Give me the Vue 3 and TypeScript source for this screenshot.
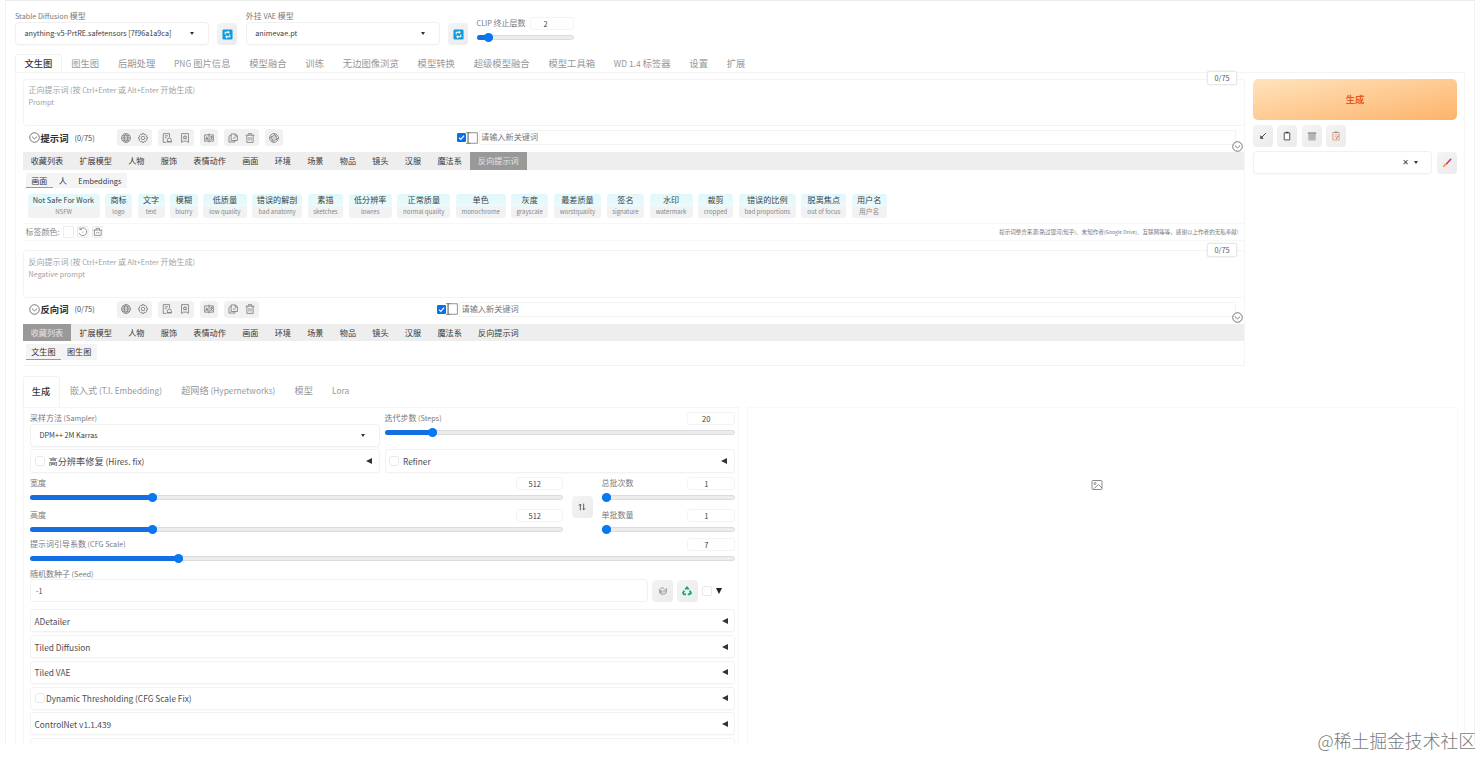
<script setup lang="ts">
import { h, type FunctionalComponent } from 'vue'

interface Tag { zh: string; en: string; w: number }
interface PromptBlock {
  key: string
  title: string
  placeholder: string
  hint: string
  icons: string[][]
  active: string
  subs: string[]
  tags: Tag[]
}

// Sets Latin runs slightly smaller than the Chinese text around them.
const Mix: FunctionalComponent<{ t: string }> = (props) =>
  h('span', { class: 'mix' }, props.t.split(/([\x20-\x7e]+)/).filter(Boolean).map((s) =>
    /^[\x20-\x7e]/.test(s) ? h('span', { class: 'latin' }, s) : s))
Mix.props = ['t']

const icons: Record<string, string> = {
  globe: 'M8 1a7 7 0 1 0 0 14A7 7 0 0 0 8 1ZM1 8h14M2.2 4.5h11.6M2.2 11.5h11.6M8 1c-4 4-4 10 0 14M8 1c4 4 4 10 0 14',
  gear: 'M6.5 1h3l.5 2 1.8-.8 2 2L13 6l2 .5v3l-2 .5.8 1.8-2 2L10 13l-.5 2h-3L6 13l-1.8.8-2-2L3 10l-2-.5v-3L3 6l-.8-1.8 2-2L6 3ZM8 5.3a2.7 2.7 0 1 0 0 5.4 2.7 2.7 0 0 0 0-5.4Z',
  history: 'M7 15H2V1h10v6M4.5 4.5h5M4.5 7.5h3M12 8a3.5 3.5 0 0 0-3.5 3.5V14H15v-2.5A3.5 3.5 0 0 0 12 8M8 14h7.5',
  bookmark: 'M2.5 1h11v14l-3-2h-5l-3 2ZM8 4l1 2 2 .2-1.5 1.4.4 2L8 8.6l-1.9 1 .4-2L5 6.2 7 6Z',
  translate: 'M1 3h14v10H1ZM8 1v14M3 11l1.5-5L6 11M3.5 9.5h2M10 6h4M12 5v2M10.5 11 13.5 6.5M10.5 7.5l3 3.5',
  copy: 'M5 1.5h7l3 3V12H5ZM5 4H3L1.5 6v8.5H11V12M11.5 1.5V5H15M8 8h4',
  trash: 'M1 3.5h14M5.5 3V1h5v2M3 3.5V15h10V3.5M6.3 6.5v5.5M9.7 6.5v5.5',
  swirl: 'M8 1a7 7 0 1 0 0 14A7 7 0 0 0 8 1ZM8 4l3.5 2v4L8 12l-3.5-2V6ZM8 1l4 4.5M15 8l-4 3M8 15l-4-4.5M1 8l4-3M8 7v2',
}

const mainTabs = ['文生图', '图生图', '后期处理', 'PNG 图片信息', '模型融合', '训练', '无边图像浏览', '模型转换', '超级模型融合', '模型工具箱', 'WD 1.4 标签器', '设置', '扩展']
const categories = ['收藏列表', '扩展模型', '人物', '服饰', '表情动作', '画面', '环境', '场景', '物品', '镜头', '汉服', '魔法系', '反向提示词']
const genTabs = ['生成', '嵌入式 (T.I. Embedding)', '超网络 (Hypernetworks)', '模型', 'Lora']

const tags: Tag[] = [
  { zh: 'Not Safe For Work', en: 'NSFW', w: 72 },
  { zh: '商标', en: 'logo', w: 27.5 },
  { zh: '文字', en: 'text', w: 27 },
  { zh: '模糊', en: 'blurry', w: 28 },
  { zh: '低质量', en: 'low quality', w: 43.5 },
  { zh: '错误的解剖', en: 'bad anatomy', w: 50.4 },
  { zh: '素描', en: 'sketches', w: 35.6 },
  { zh: '低分辨率', en: 'lowres', w: 43.3 },
  { zh: '正常质量', en: 'normal quality', w: 53.3 },
  { zh: '单色', en: 'monochrome', w: 50 },
  { zh: '灰度', en: 'grayscale', w: 37.2 },
  { zh: '最差质量', en: 'worstquality', w: 47.8 },
  { zh: '签名', en: 'signature', w: 37.7 },
  { zh: '水印', en: 'watermark', w: 43 },
  { zh: '裁剪', en: 'cropped', w: 35.3 },
  { zh: '错误的比例', en: 'bad proportions', w: 57.5 },
  { zh: '脱离焦点', en: 'out of focus', w: 45 },
  { zh: '用户名', en: '用户名', w: 35 },
]

const prompts: PromptBlock[] = [
  {
    key: 'positive', title: '提示词', placeholder: '正向提示词 (按 Ctrl+Enter 或 Alt+Enter 开始生成)', hint: 'Prompt',
    icons: [['globe', 'gear'], ['history', 'bookmark'], ['translate'], ['copy', 'trash'], ['swirl']],
    active: '反向提示词', subs: ['画面', '人', 'Embeddings'], tags,
  },
  {
    key: 'negative', title: '反向词', placeholder: '反向提示词 (按 Ctrl+Enter 或 Alt+Enter 开始生成)', hint: 'Negative prompt',
    icons: [['globe', 'gear'], ['history', 'bookmark'], ['translate'], ['copy', 'trash']],
    active: '收藏列表', subs: ['文生图', '图生图'], tags: [],
  },
]

const accordions = [
  { name: 'ADetailer', check: false },
  { name: 'Tiled Diffusion', check: false },
  { name: 'Tiled VAE', check: false },
  { name: 'Dynamic Thresholding (CFG Scale Fix)', check: true },
  { name: 'ControlNet v1.1.439', check: false },
]

const fill = (px: number) => ({ width: `${px}px` })
</script>

<template>
  <div class="page">
    <div class="frame">
      <header class="quick">
        <div class="field model">
          <span class="label"><Mix t="Stable Diffusion 模型" /></span>
          <div class="select"><Mix t="anything-v5-PrtRE.safetensors [7f96a1a9ca]" /><i class="caret" /></div>
        </div>
        <button class="btn refresh">
          <svg viewBox="0 0 12 12"><rect x=".5" y=".5" width="11" height="11" rx="1.5" fill="#129bdb" /><path d="M3.5 6V3.5h3.8M6.3 2.2 7.8 3.5 6.3 4.9M8.5 6v2.5H4.7M5.7 7.1 4.2 8.5l1.5 1.4" fill="none" stroke="#fff" stroke-width="1.1" /></svg>
        </button>
        <div class="field model">
          <span class="label"><Mix t="外挂 VAE 模型" /></span>
          <div class="select"><Mix t="animevae.pt" /><i class="caret" /></div>
        </div>
        <button class="btn refresh">
          <svg viewBox="0 0 12 12"><rect x=".5" y=".5" width="11" height="11" rx="1.5" fill="#129bdb" /><path d="M3.5 6V3.5h3.8M6.3 2.2 7.8 3.5 6.3 4.9M8.5 6v2.5H4.7M5.7 7.1 4.2 8.5l1.5 1.4" fill="none" stroke="#fff" stroke-width="1.1" /></svg>
        </button>
        <div class="clip">
          <div class="slider-head"><span class="label"><Mix t="CLIP 终止层数" /></span><span class="num">2</span></div>
          <div class="track"><div class="bar" :style="fill(16)"><b /></div></div>
        </div>
      </header>

      <nav class="tabs main-tabs">
        <span v-for="(t, i) in mainTabs" :key="t" class="tab" :class="{ on: i === 0 }"><Mix :t="t" /></span>
      </nav>

      <main class="body">
        <div class="top">
          <div class="prompts">
            <section v-for="p in prompts" :key="p.key" class="prompt" :class="p.key">
              <div class="textarea">
                <p><Mix :t="p.placeholder" /></p><p><Mix :t="p.hint" /></p>
                <span class="counter">0/75</span>
              </div>
              <div class="head">
                <svg class="chev" viewBox="0 0 12 12"><circle cx="6" cy="6" r="5.2" /><path d="M3.2 5 6 7.6 8.8 5" /></svg>
                <strong>{{ p.title }}</strong><span class="count">(0/75)</span>
                <div class="groups">
                  <div v-for="(g, gi) in p.icons" :key="gi" class="group">
                    <svg v-for="n in g" :key="n" viewBox="0 0 16 16"><path :d="icons[n]" /></svg>
                  </div>
                </div>
                <div class="keyword">
                  <svg class="tick" viewBox="0 0 10 10"><rect width="10" height="10" rx="1.5" fill="#0b6fe6" /><path d="m2.2 5.2 2 2 3.7-4.2" fill="none" stroke="#fff" stroke-width="1.3" /></svg>
                  <svg class="cursor" viewBox="0 0 12 12"><rect x="2" y=".8" width="9.3" height="10.4" /><path d="M0 .6h4.5M2.2.6v10.8M0 11.4h4.5" /></svg>
                  <div class="kinput">请输入新关键词</div>
                </div>
                <svg class="chev fold" viewBox="0 0 12 12"><circle cx="6" cy="6" r="5.2" /><path d="M3.2 5 6 7.6 8.8 5" /></svg>
              </div>
              <div class="cats">
                <span v-for="c in categories" :key="c" :class="{ on: c === p.active }">{{ c }}</span>
              </div>
              <div class="subs">
                <div v-for="(s, i) in p.subs" :key="s" class="sub" :class="{ on: i === 0 }"><Mix :t="s" /></div>
              </div>
              <div v-if="p.tags.length" class="taglist">
                <div v-for="t in p.tags" :key="t.zh" class="tag" :style="fill(t.w)"><div class="zh"><Mix :t="t.zh" /></div><em><Mix :t="t.en" /></em></div>
              </div>
              <div v-if="p.tags.length" class="colors">
                <span class="ctitle">标签颜色:</span><i class="swatch" />
                <svg viewBox="0 0 12 12"><rect x=".5" y=".5" width="11" height="11" rx="1" class="edge" /><path d="M3 3.2a4 4 0 1 1-.7 4M3 1.5v2h2M6 5.5v1.2" /></svg>
                <svg viewBox="0 0 12 12"><rect x=".5" y=".5" width="11" height="11" rx="1" class="edge" /><path d="M1.5 4h9M4.2 4V2.2h3.6V4M2.5 4v5.5h7V4M5 6v1.5M7 6v1.5" /></svg>
                <small><Mix t="提示词整合来源:路过银河(知乎)、未知作者(Google Drive)、互联网等等，感谢以上作者的无私奉献!" /></small>
              </div>
            </section>
          </div>
          <aside class="side">
            <button class="generate">生成</button>
            <div class="tools">
              <button class="btn"><svg viewBox="0 0 12 12"><path d="M9.3 2.7 3.8 8.2" fill="none" stroke="#444" stroke-width="1.2" /><path d="M2.8 5.2v4h4Z" fill="#333" /></svg></button>
              <button class="btn"><svg viewBox="0 0 12 12"><path d="M2.7 2.2h6.6v8.5H2.7Z" fill="#fff" stroke="#555" stroke-width="1.2" /><path d="M4.3 1.8h3.4" stroke="#333" stroke-width="1.5" /></svg></button>
              <button class="btn"><svg viewBox="0 0 12 12"><path d="M1 1.5h10v2H1Z" fill="#999" /><path d="M2 3.5h8V11H2Z" fill="#c9c9cc" stroke="#999" stroke-width=".6" /><path d="M4 4v6.5M6 4v6.5M8 4v6.5M2.3 6h7.4M2.5 8.5h7" stroke="#999" stroke-width=".5" /></svg></button>
              <button class="btn"><svg viewBox="0 0 12 12"><path d="M2.2 1.8h7.6v9H2.2Z" fill="#f3ece8" stroke="#d69a76" stroke-width="1" /><path d="M4.3 1.5h3.4" stroke="#777" stroke-width="1.3" /><path d="M4 4.5h4M4 6.5h2.5" stroke="#aaa" stroke-width=".7" /><path d="M9 5.5 6 9.5" stroke="#ef8354" stroke-width="1.4" /></svg></button>
            </div>
            <div class="styles">
              <div class="select"><span class="clear">✕</span><i class="caret" /></div>
              <button class="btn"><svg viewBox="0 0 12 12"><path d="M10.5 1.5 5.5 7" stroke="#d42b6a" stroke-width="1.8" stroke-linecap="round" /><path d="M4 7.8 2.2 9.8" stroke="#f2a33c" stroke-width="2.4" stroke-linecap="round" /></svg></button>
            </div>
          </aside>
        </div>

        <div class="generation">
          <nav class="tabs gen-tabs">
            <span v-for="(t, i) in genTabs" :key="t" class="tab" :class="{ on: i === 0 }"><Mix :t="t" /></span>
          </nav>
          <div class="columns">
            <div class="settings">
              <div class="row sampler">
                <div class="field wide">
                  <span class="label"><Mix t="采样方法 (Sampler)" /></span>
                  <div class="select"><Mix t="DPM++ 2M Karras" /><i class="caret" /></div>
                </div>
                <div class="slide steps">
                  <div class="slider-head"><span class="label"><Mix t="迭代步数 (Steps)" /></span><span class="num">20</span></div>
                  <div class="track"><div class="bar" :style="fill(52)"><b /></div></div>
                </div>
              </div>
              <div class="row pair">
                <div class="acc"><i class="check" /><Mix t="高分辨率修复 (Hires. fix)" /><i class="arrow" /></div>
                <div class="acc"><i class="check" /><Mix t="Refiner" /><i class="arrow" /></div>
              </div>
              <div class="row dims">
                <div class="stack size">
                  <div class="slide">
                    <div class="slider-head"><span class="label">宽度</span><span class="num">512</span></div>
                    <div class="track"><div class="bar" :style="fill(127)"><b /></div></div>
                  </div>
                  <div class="slide">
                    <div class="slider-head"><span class="label">高度</span><span class="num">512</span></div>
                    <div class="track"><div class="bar" :style="fill(127)"><b /></div></div>
                  </div>
                </div>
                <button class="btn swap"><svg viewBox="0 0 12 12"><path d="M4 10V2.5M2.2 4.5 4 2.5l1 1.5M8 2v7.5M9.8 7.5 8 9.5 7 8" fill="none" stroke="#555" stroke-width="1.1" /></svg></button>
                <div class="stack batch">
                  <div class="slide">
                    <div class="slider-head"><span class="label">总批次数</span><span class="num">1</span></div>
                    <div class="track"><div class="bar" :style="fill(9)"><b /></div></div>
                  </div>
                  <div class="slide">
                    <div class="slider-head"><span class="label">单批数量</span><span class="num">1</span></div>
                    <div class="track"><div class="bar" :style="fill(9)"><b /></div></div>
                  </div>
                </div>
              </div>
              <div class="slide cfg">
                <div class="slider-head"><span class="label"><Mix t="提示词引导系数 (CFG Scale)" /></span><span class="num">7</span></div>
                <div class="track"><div class="bar" :style="fill(152.5)"><b /></div></div>
              </div>
              <span class="label seed-label"><Mix t="随机数种子 (Seed)" /></span>
              <div class="seed">
                <div class="input"><Mix t="-1" /></div>
                <button class="btn"><svg viewBox="0 0 12 12"><path d="M1.5 4 5 6v4.5L2 8.5ZM6 6l4.5-3-.8 5.5-3.5 2" fill="#ddd" stroke="#888" stroke-width=".8" /><path d="M3 2.5h4M8 6l1.5 1M3 6v2" stroke="#777" stroke-width=".9" /></svg></button>
                <button class="btn"><svg viewBox="0 0 12 12"><path d="M4 4.3 6 1.5l2 2.8M9.3 5.5l1.5 3.2L8.5 10H7M4.8 10H2.2L1.2 8.2l1.5-2.7" fill="none" stroke="#14a866" stroke-width="2.2" stroke-linejoin="round" /></svg></button>
                <i class="check" /><i class="down" />
              </div>
              <div class="accs">
                <div v-for="a in accordions" :key="a.name" class="acc"><i v-if="a.check" class="check" /><Mix :t="a.name" /><i class="arrow" /></div>
                <div class="acc" />
              </div>
            </div>
            <div class="gallery">
              <svg viewBox="0 0 12 12"><rect x="1" y="1.5" width="10" height="9" rx="1" /><circle cx="4" cy="4.5" r="1" /><path d="m2.5 10 5-4.5L11 9" /></svg>
            </div>
          </div>
        </div>
      </main>
    </div>
    <div class="watermark">@稀土掘金技术社区</div>
  </div>
</template>

<style>
body { margin: 0; background: #fff; overflow: hidden; }
.mix { white-space: pre; }
.latin { font-size: .905em; line-height: 1; }
</style>

<style scoped>
* { box-sizing: border-box; }
.page { position: relative; width: 1483px; height: 757px; overflow: hidden; font: 8px/12px "Noto Sans CJK SC", "Noto Sans", sans-serif; color: #4b4d52; background: #fff; white-space: nowrap; }
.frame { margin-left: 5px; width: 1470px; height: 745px; border: 1px solid #f2f2f3; border-top: 1px solid #ebebec; border-bottom: 0; padding-left: 9px; overflow: hidden; }
p { margin: 0; }
button { border: 0; padding: 0; font: inherit; }
svg { display: block; }
.label { color: #77797d; font-size: 8px; line-height: 12px; display: block; }

.quick { display: flex; height: 53px; padding-top: 8px; }
.field { width: 194px; }
.field .label { height: 12.5px; line-height: 13px; }
.select { display: flex; align-items: center; height: 23.5px; padding: 0 14px 0 8.5px; border: 1px solid #f0f0f1; border-radius: 4px; justify-content: space-between; font-size: 8px; color: #3b3d42; background: #fff; box-shadow: 0 1px 1px #fafafa; }
.caret { border: 2.4px solid transparent; border-top: 3px solid #333; border-bottom: 0; }
.btn { display: flex; align-items: center; justify-content: center; width: 20px; height: 22px; border-radius: 4px; background: linear-gradient(135deg, #f4f4f5, #ebebed); flex: none; }
.btn svg { width: 10px; height: 10px; }
.refresh { margin: 14px 8.4px 0; width: 20px; }
.refresh svg { width: 11px; height: 11px; }
.clip { width: 97px; padding-top: 7.5px; }
.slider-head { display: flex; justify-content: space-between; height: 13px; }
.num { width: 47px; height: 13px; border: 1px solid #f3f3f4; border-radius: 3px; text-align: center; padding-right: 9px; line-height: 12px; font-size: 7.5px; color: #3f4146; }
.clip .num { width: 44px; padding-right: 12px; }
.track { height: 5px; margin-top: 5px; border: 1px solid #dcdcdd; border-radius: 3px; background: #ececed; }
.bar { position: relative; height: 5px; margin: -1px 0 0 -1px; border-radius: 3px; background: #1470e0; }
.bar b { position: absolute; right: 0; top: -2px; width: 9px; height: 9px; border-radius: 50%; background: #0877f2; }

.tabs { display: flex; color: #96989b; font-size: 9.33px; }
.tabs .on { color: #34363b; font-weight: 500; border: 1px solid #f2f2f3; border-bottom: 0; border-radius: 3px 3px 0 0; }
.main-tabs { height: 18px; line-height: 19px; }
.main-tabs .tab { padding: 0 9.4px; height: 18px; }
.main-tabs .on { padding: 0 8.4px; line-height: 17px; }

.body { width: 1450px; height: 673px; border: 1px solid #f4f4f5; border-bottom: 0; }
.top { display: flex; justify-content: space-between; height: 303px; padding: 5.5px 7px 0 6.5px; }
.prompts { width: 1222px; }
.prompt { height: 171.5px; border-right: 1px solid #f5f5f6; }
.prompt.negative { height: 115.5px; border-bottom: 1px solid #f3f3f4; }
.textarea { position: relative; height: 47.5px; border: 1px solid #f3f3f4; border-right: 0; border-radius: 4px; padding: 4.5px 5px 0; color: #a0a2a6; font-size: 8px; line-height: 12px; }
.counter { position: absolute; right: 6.5px; top: -8.5px; width: 30px; height: 14px; border: 1px solid #e9e9ea; border-radius: 2px; box-shadow: 0 0 2px #ddd; background: #fff; text-align: center; line-height: 12px; color: #55575b; font-size: 7.3px; }
.head { position: relative; display: flex; align-items: center; height: 26px; padding: 0 8px 3px 6px; }
.chev { width: 11px; height: 11px; fill: none; stroke: #55575b; stroke-width: .9; flex: none; }
.head strong { margin-left: 1px; font-size: 9.33px; color: #2c2e33; width: 34px; font-weight: 700; }
.count { width: 42px; font-size: 7.4px; }
.groups { display: flex; gap: 6px; width: 340px; flex: none; }
.negative .groups { width: 320.5px; }
.group { display: flex; gap: 7.5px; padding: 3.5px 4px; border-radius: 3px; background: #f1f1f2; height: 17px; }
.group svg { width: 10px; height: 10px; fill: none; stroke: #6c6e72; stroke-width: 1.2; }
.keyword { display: flex; align-items: center; flex: 1; }
.tick { width: 9px; height: 9px; }
.cursor { width: 12px; height: 12px; margin-right: 1px; fill: none; stroke: #777; stroke-width: .8; }
.kinput { flex: 1; height: 15px; border: 1px solid #f3f3f4; padding-left: 1.5px; color: #77797d; font-size: 8.17px; line-height: 12px; }
.fold { position: absolute; right: 1px; top: 14.5px; }
.cats { display: flex; height: 17.5px; background: #eee; font-size: 8.15px; line-height: 17px; color: #35373b; }
.cats span { padding: 0 8.15px; }
.cats .on { background: #999; color: #e4e4e4; }
.subs { display: flex; width: max-content; height: 15.5px; margin: 3px 0 0 3px; background: #f4f4f5; font-size: 8.15px; line-height: 15px; color: #35373b; }
.sub { padding: 0 5.7px; }
.subs .on { border-bottom: 1px solid #999; }
.taglist { display: flex; gap: 5.3px; margin: 6px 0 0 5px; height: 28.5px; }
.tag { flex: none; height: 23.5px; border-radius: 3px; background: linear-gradient(#e0f8fa 0, #ecfafb 50%, #f2f2f3 56%, #f2f2f3); text-align: center; overflow: hidden; }
.zh { height: 12px; line-height: 12px; font-size: 8.15px; color: #394347; }
.tag em { display: block; font-style: normal; font-size: 6.7px; line-height: 11px; color: #85878a; }
.colors { display: flex; align-items: center; height: 18px; padding: 0 5px 0 3px; border-top: 1px solid #f7f7f8; border-bottom: 1px solid #f7f7f8; color: #85878b; }
.ctitle { width: 37px; }
.swatch { width: 11px; height: 12px; border: 1px solid #eee; margin-right: 3.5px; }
.colors svg { width: 11.5px; height: 12px; margin-right: 3px; fill: none; stroke: #808286; stroke-width: .9; }
.colors .edge { stroke: #e3e3e4; }
.colors small { margin-left: auto; font-size: 5.55px; color: #77797c; line-height: 12px; }

.side { width: 204px; }
.generate { display: block; width: 204px; height: 41px; border-radius: 5px; background: linear-gradient(to bottom right, #ffe3bd, #fdb36a); color: #e8591f; font-size: 9.33px; font-weight: 700; line-height: 40px; }
.tools { display: flex; gap: 4.3px; margin-top: 5px; }
.styles { display: flex; justify-content: space-between; margin-top: 4px; }
.styles .select { width: 179px; justify-content: flex-end; gap: 5px; padding-right: 13px; }
.clear { font: 8px "DejaVu Sans", sans-serif; }
.styles .btn { margin-top: 1.5px; }

.gen-tabs { height: 31px; padding-left: 6.5px; line-height: 29px; font-size: 9.17px; }
.gen-tabs .tab { padding: 0 9.6px; }
.gen-tabs .on { padding: 0 9px 0 8.3px; line-height: 28px; }
.columns { display: flex; height: 340px; }
.settings { width: 716.5px; margin-left: 6.5px; border: 1px solid #f5f5f6; border-width: 1px 1px 0; padding: 3.5px 3.5px 0 6.5px; }
.row { display: flex; justify-content: space-between; }
.sampler { height: 37px; }
.field.wide { width: 350px; }
.wide .label { line-height: 12px; height: 12px; }
.steps { width: 350px; }
.slide { height: 32px; }
.slide .num { width: 47.5px; }
.slide .label { line-height: 11px; }
.slide .track { margin-top: 5px; }
.acc { display: flex; align-items: center; height: 24px; padding: 0 5.5px 0 3.5px; border: 1px solid #f2f2f3; border-radius: 3px; box-shadow: 0 1px 1px #fafafa; font-size: 9.2px; color: #4b4d52; flex: none; }
.arrow { margin-left: auto; border: 3.2px solid transparent; border-right: 6px solid #333; border-left: 0; }
.check { width: 10px; height: 10px; border: 1px solid #e8e8ea; border-radius: 3px; margin-right: 4px; flex: none; }
.pair .acc { width: 350px; padding-right: 7px; }
.dims { height: 65px; padding-top: 4.5px; }
.size { width: 533px; }
.batch { width: 133px; }
.swap { margin: 19px 0 0; width: 21px; }
.cfg { margin-top: 0; height: 29px; }
.seed-label { height: 12.5px; line-height: 13px; }
.seed { display: flex; align-items: center; height: 23px; }
.input { width: 618px; height: 23px; border: 1px solid #f1f1f2; border-radius: 4px; padding-left: 5px; line-height: 22px; margin-right: 4px; }
.seed .btn { width: 21px; margin-right: 3.8px; }
.seed .check { margin-right: 4.2px; border-radius: 2px; }
.down { border: 3.2px solid transparent; border-top: 6px solid #222; border-bottom: 0; }
.accs { display: flex; flex-direction: column; gap: 2.8px; margin-top: 7.3px; }
.accs .acc { height: 23px; }
.accs .check { margin-right: 1.5px; }
.gallery { margin-left: 8px; width: 711px; border: 1px solid #f8f8f9; border-bottom: 0; display: flex; justify-content: center; padding-top: 71px; }
.gallery svg { width: 12px; height: 12px; margin-right: 12px; fill: none; stroke: #7c7e82; stroke-width: .9; }
.watermark { position: absolute; right: 7px; bottom: 4px; font-size: 17.8px; line-height: 26px; font-weight: 300; color: #77797c; }
</style>
